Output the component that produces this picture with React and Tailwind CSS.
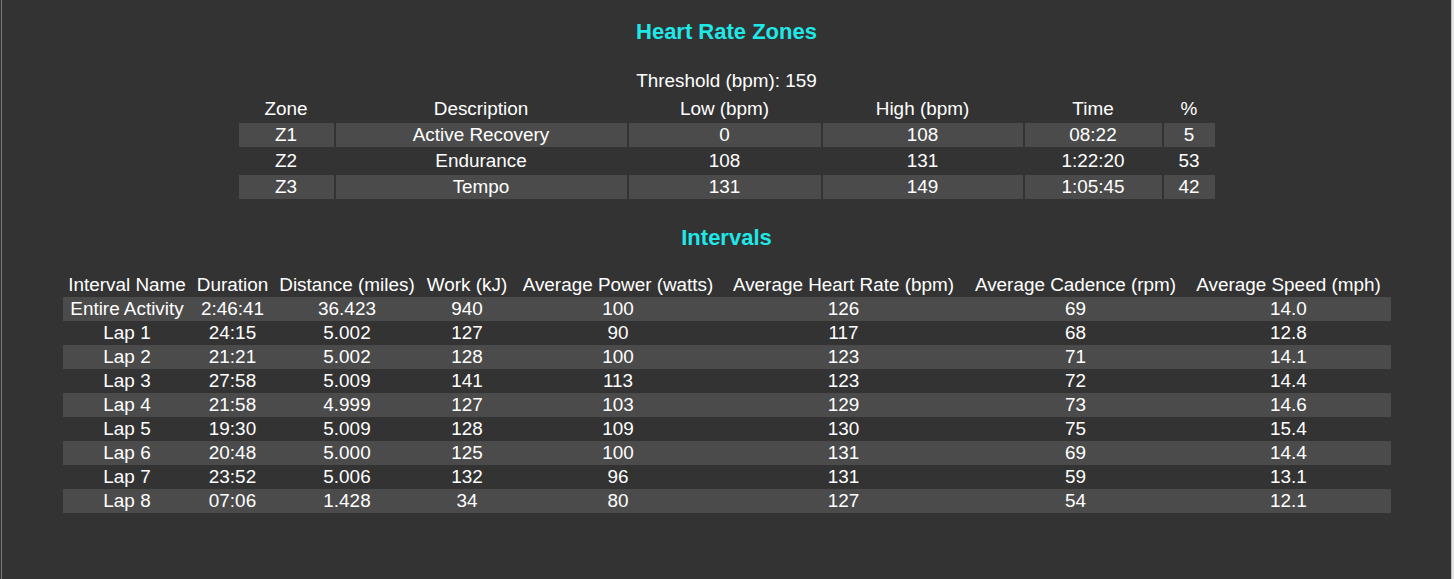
// Heart rate zones + intervals summary panel

const zones = [
  { zone: 'Z1', desc: 'Active Recovery', low: '0', high: '108', time: '08:22', pct: '5' },
  { zone: 'Z2', desc: 'Endurance', low: '108', high: '131', time: '1:22:20', pct: '53' },
  { zone: 'Z3', desc: 'Tempo', low: '131', high: '149', time: '1:05:45', pct: '42' },
];

const intervals = [
  ['Entire Activity', '2:46:41', '36.423', '940', '100', '126', '69', '14.0'],
  ['Lap 1', '24:15', '5.002', '127', '90', '117', '68', '12.8'],
  ['Lap 2', '21:21', '5.002', '128', '100', '123', '71', '14.1'],
  ['Lap 3', '27:58', '5.009', '141', '113', '123', '72', '14.4'],
  ['Lap 4', '21:58', '4.999', '127', '103', '129', '73', '14.6'],
  ['Lap 5', '19:30', '5.009', '128', '109', '130', '75', '15.4'],
  ['Lap 6', '20:48', '5.000', '125', '100', '131', '69', '14.4'],
  ['Lap 7', '23:52', '5.006', '132', '96', '131', '59', '13.1'],
  ['Lap 8', '07:06', '1.428', '34', '80', '127', '54', '12.1'],
];

const intervalHeaders = [
  { label: 'Interval Name', w: 'w-[129px]' },
  { label: 'Duration', w: 'w-[82px]' },
  { label: 'Distance (miles)', w: 'w-[147px]' },
  { label: 'Work (kJ)', w: 'w-[93px]' },
  { label: 'Average Power (watts)', w: 'w-[209px]' },
  { label: 'Average Heart Rate (bpm)', w: 'w-[242px]' },
  { label: 'Average Cadence (rpm)', w: 'w-[222px]' },
  { label: 'Average Speed (mph)', w: 'w-[204px]' },
];

export default function App() {
  return (
    <div className="flex h-[579px] w-full overflow-hidden bg-[#333333] font-['Liberation_Sans',Arial,sans-serif] text-[18.9px] leading-[22px] text-white">
      <div className="w-px bg-[#333333]" />
      <div className="flex flex-1 flex-col items-center border-l border-[#7a7a7a]">
        {/* Zonas */}
        <h2 className="mt-5 text-[22px] font-bold leading-[24px] text-[#1fe8e8]">Heart Rate Zones</h2>
        <div className="mt-[26px]">Threshold (bpm): 159</div>
        <table className="mt-[3px] border-separate border-spacing-[2px] text-center">
          <thead>
            <tr>
              <th className="w-[95px] py-px font-normal">Zone</th>
              <th className="w-[291px] py-px font-normal">Description</th>
              <th className="w-[192px] py-px font-normal">Low (bpm)</th>
              <th className="w-[200px] py-px font-normal">High (bpm)</th>
              <th className="w-[137px] py-px font-normal">Time</th>
              <th className="w-[51px] py-px font-normal">%</th>
            </tr>
          </thead>
          <tbody>
            {zones.map((z, i) => {
              const bg = i % 2 === 0 ? 'bg-[#4b4b4b]' : '';
              return (
                <tr key={z.zone}>
                  <td className={`py-px ${bg}`}>{z.zone}</td>
                  <td className={`py-px ${bg}`}>{z.desc}</td>
                  <td className={`py-px ${bg}`}>{z.low}</td>
                  <td className={`py-px ${bg}`}>{z.high}</td>
                  <td className={`py-px ${bg}`}>{z.time}</td>
                  <td className={`py-px ${bg}`}>{z.pct}</td>
                </tr>
              );
            })}
          </tbody>
        </table>

        {/* Intervalos */}
        <h2 className="mt-[25px] text-[22px] font-bold leading-[24px] text-[#1fe8e8]">Intervals</h2>
        <table className="mt-[23px] table-fixed border-collapse text-center">
          <thead>
            <tr>
              {intervalHeaders.map((h) => (
                <th key={h.label} className={`${h.w} whitespace-nowrap p-0 py-px font-normal`}>{h.label}</th>
              ))}
            </tr>
          </thead>
          <tbody>
            {intervals.map((row, i) => (
              <tr key={row[0]} className={i % 2 === 0 ? 'bg-[#4b4b4b]' : ''}>
                {row.map((cell, j) => (
                  <td key={j} className="whitespace-nowrap p-0 py-px">{cell}</td>
                ))}
              </tr>
            ))}
          </tbody>
        </table>
      </div>
      <div className="w-[3px] border-l border-[#bdbdbd] bg-[#e4e4e4]" />
    </div>
  );
}
